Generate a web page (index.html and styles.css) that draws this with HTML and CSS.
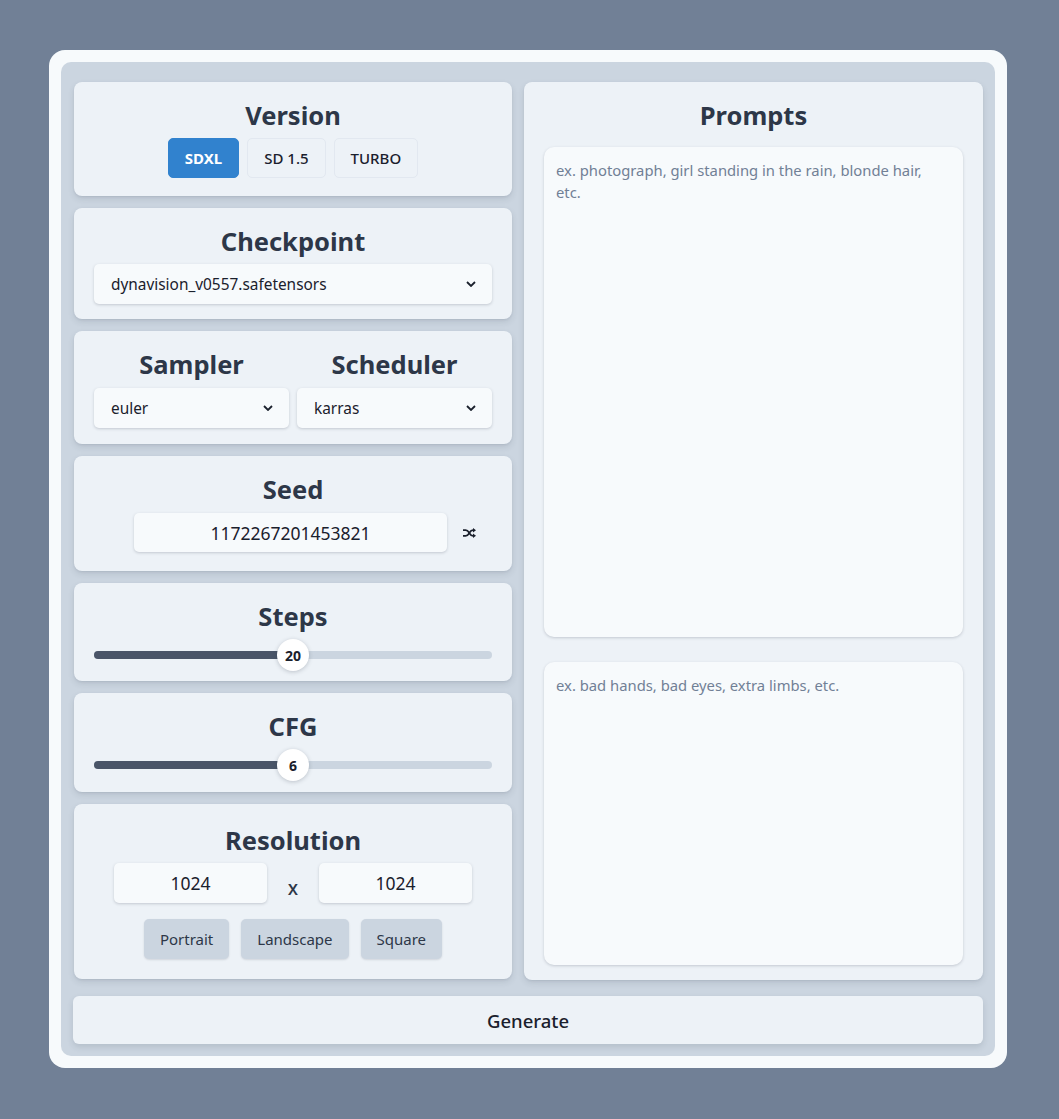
FILE: index.html
```html
<!DOCTYPE html>
<html lang="en">
<head>
<meta charset="utf-8">
<title>Generator</title>
<link rel="stylesheet" href="styles.css">
</head>
<body>
<div class="frame">
  <div class="panel">
    <div class="columns">
      <div class="left">
        <section class="card card-version">
          <h2 class="title">Version</h2>
          <div class="versions">
            <button class="vbtn active">SDXL</button>
            <button class="vbtn">SD 1.5</button>
            <button class="vbtn">TURBO</button>
          </div>
        </section>
        <section class="card card-checkpoint">
          <h2 class="title">Checkpoint</h2>
          <div class="select"><span>dynavision_v0557.safetensors</span>
            <svg class="chev" width="10" height="6" viewBox="0 0 10 6"><path d="M1 1l4 4 4-4" fill="none" stroke="#1a202c" stroke-width="1.8"/></svg>
          </div>
        </section>
        <section class="card card-sampler">
          <div class="pair">
            <div class="col">
              <h2 class="title">Sampler</h2>
              <div class="select"><span>euler</span>
                <svg class="chev" width="10" height="6" viewBox="0 0 10 6"><path d="M1 1l4 4 4-4" fill="none" stroke="#1a202c" stroke-width="1.8"/></svg>
              </div>
            </div>
            <div class="col">
              <h2 class="title">Scheduler</h2>
              <div class="select"><span>karras</span>
                <svg class="chev" width="10" height="6" viewBox="0 0 10 6"><path d="M1 1l4 4 4-4" fill="none" stroke="#1a202c" stroke-width="1.8"/></svg>
              </div>
            </div>
          </div>
        </section>
        <section class="card card-seed">
          <h2 class="title">Seed</h2>
          <div class="seed-row">
            <div class="field seed">1172267201453821</div>
            <button class="shuffle" aria-label="random">
              <svg width="13" height="10" viewBox="0 0 13 10"><path d="M0 2.2h2.6c1.6 0 2.4.6 3.4 2.3l.6 1c1 1.7 1.8 2.3 3.4 2.3H11" fill="none" stroke="#1a202c" stroke-width="1.7"/><path d="M0 7.8h2.6c1.6 0 2.4-.6 3.4-2.3l.6-1c1-1.7 1.8-2.3 3.4-2.3H11" fill="none" stroke="#1a202c" stroke-width="1.7"/><path d="M10 0l3 2.2-3 2.2zM10 5.6l3 2.2-3 2.2z" fill="#1a202c"/></svg>
            </button>
          </div>
        </section>
        <section class="card card-slider">
          <h2 class="title">Steps</h2>
          <div class="slider">
            <div class="track"><div class="fill" style="width:50%"></div></div>
            <div class="thumb" style="left:50%">20</div>
          </div>
        </section>
        <section class="card card-slider card-cfg">
          <h2 class="title">CFG</h2>
          <div class="slider">
            <div class="track"><div class="fill" style="width:50%"></div></div>
            <div class="thumb" style="left:50%">6</div>
          </div>
        </section>
        <section class="card card-res">
          <h2 class="title">Resolution</h2>
          <div class="res-row">
            <div class="field res">1024</div>
            <span class="times">x</span>
            <div class="field res">1024</div>
          </div>
          <div class="presets">
            <button class="pbtn">Portrait</button>
            <button class="pbtn">Landscape</button>
            <button class="pbtn">Square</button>
          </div>
        </section>
      </div>
      <section class="card card-prompts">
        <h2 class="title">Prompts</h2>
        <textarea class="prompt positive" placeholder="ex. photograph, girl standing in the rain, blonde hair,&#10;etc."></textarea>
        <textarea class="prompt negative" placeholder="ex. bad hands, bad eyes, extra limbs, etc."></textarea>
      </section>
    </div>
    <button class="generate">Generate</button>
  </div>
</div>
</body>
</html>
```

FILE: styles.css
```css
* { box-sizing: border-box; }
html, body { margin: 0; padding: 0; }
body {
  background: #718096;
  font-family: "Noto Sans", "Open Sans", sans-serif;
  color: #1a202c;
  padding-top: 50px;
  min-height: 1119px;
}
.frame {
  width: 958px;
  margin: 0 0 0 49px;
  background: #f7fafc;
  border-radius: 16px;
  padding: 12px;
}
.panel {
  background: #cbd5e0;
  border-radius: 10px;
  padding: 20px 12px 12px 13px;
}
.columns {
  display: grid;
  grid-template-columns: 438px 1fr;
  gap: 12px;
}
.left {
  display: flex;
  flex-direction: column;
  gap: 12px;
}
.card {
  background: #edf2f7;
  border-radius: 8px;
  box-shadow: 0 3px 6px rgba(45, 55, 72, 0.12), 0 1px 2px rgba(45, 55, 72, 0.08);
  padding: 16px 20px 15px;
}
.title {
  margin: 0 0 6px;
  font-size: 25.5px;
  font-weight: 700;
  line-height: 34px;
  text-align: center;
  color: #2d3748;
}
.card-version { padding-bottom: 18px; }
.versions {
  display: flex;
  justify-content: center;
  gap: 8px;
  margin-top: 2px;
}
button { font-family: inherit; cursor: pointer; }
.vbtn {
  height: 40px;
  padding: 0 16px;
  border: 1px solid #e2e8f0;
  background: #edf2f7;
  border-radius: 5px;
  font-size: 15px;
  font-weight: 500;
  color: #1a202c;
}
.vbtn.active {
  background: #3182ce;
  border-color: #3182ce;
  color: #fff;
  font-weight: 700;
}
.select {
  height: 40px;
  background: #f7fafc;
  border-radius: 5px;
  box-shadow: 0 1px 3px rgba(45, 55, 72, 0.22);
  display: flex;
  align-items: center;
  justify-content: space-between;
  padding: 0 16px 0 17px;
  font-size: 15.4px;
  color: #1a202c;
}
.chev { display: block; }
.pair {
  display: grid;
  grid-template-columns: 1fr 1fr;
  gap: 8px;
}
.card-sampler { padding-bottom: 16px; }
.card-sampler .title { margin-bottom: 7px; }
.card-seed { padding-bottom: 19px; }
.card-seed .title { margin-bottom: 7px; }
.seed-row {
  display: grid;
  grid-template-columns: 40px 313px 1fr;
  align-items: center;
}
.field {
  height: 39px;
  background: #f7fafc;
  border-radius: 5px;
  box-shadow: 0 1px 3px rgba(45, 55, 72, 0.22);
  display: flex;
  align-items: center;
  justify-content: center;
  font-size: 17.5px;
  color: #1a202c;
}
.seed { grid-column: 2; }
.shuffle {
  background: none;
  border: 0;
  padding: 0;
  display: flex;
  justify-content: center;
  align-items: center;
  height: 39px;
}
.card-slider { padding-bottom: 10px; }
.card-cfg { padding-bottom: 11px; }
.slider {
  position: relative;
  height: 32px;
  display: flex;
  align-items: center;
}
.track {
  width: 100%;
  height: 8px;
  border-radius: 4px;
  background: #cbd5e0;
  overflow: hidden;
}
.fill {
  height: 100%;
  background: #4a5568;
}
.thumb {
  position: absolute;
  top: 0;
  width: 32px;
  height: 32px;
  margin-left: -16px;
  border-radius: 50%;
  background: #fff;
  box-shadow: 0 1px 4px rgba(45, 55, 72, 0.25);
  display: flex;
  align-items: center;
  justify-content: center;
  font-size: 14px;
  font-weight: 700;
  color: #1a202c;
}
.card-res { padding: 20px 20px 20px; }
.card-res .title { line-height: 33px; margin-bottom: 6px; }
.res-row {
  display: flex;
  justify-content: center;
  align-items: center;
}
.field.res { width: 153px; height: 40px; }
.times {
  width: 52px;
  text-align: center;
  font-size: 19px;
  font-weight: 500;
  color: #2d3748;
  padding-top: 9px;
}
.presets {
  display: flex;
  justify-content: center;
  gap: 12px;
  margin-top: 16px;
}
.pbtn {
  height: 40px;
  padding: 0 16px;
  border: 0;
  border-radius: 5px;
  background: #cbd5e0;
  box-shadow: 0 1px 2px rgba(45, 55, 72, 0.15);
  font-size: 15px;
  color: #2d3748;
}
.card-prompts {
  display: flex;
  flex-direction: column;
  padding: 16px 20px 15px;
}
.card-prompts .title { margin-bottom: 15px; }
.prompt {
  display: block;
  width: 100%;
  resize: none;
  border: 0;
  outline: none;
  background: #f7fafc;
  border-radius: 10px;
  box-shadow: 0 1px 3px rgba(45, 55, 72, 0.22);
  padding: 12px;
  font-family: inherit;
  font-size: 14.8px;
  line-height: 22px;
  color: #1a202c;
}
.prompt::placeholder { color: #718096; }
.positive { height: 490px; }
.negative { height: 303px; margin-top: 25px; }
.generate {
  display: block;
  width: 910px;
  margin: 16px 0 0 -1px;
  height: 48px;
  border: 0;
  border-radius: 6px;
  background: #edf2f7;
  box-shadow: 0 3px 6px rgba(45, 55, 72, 0.14);
  font-size: 18.5px;
  font-weight: 500;
  color: #1a202c;
}
```
